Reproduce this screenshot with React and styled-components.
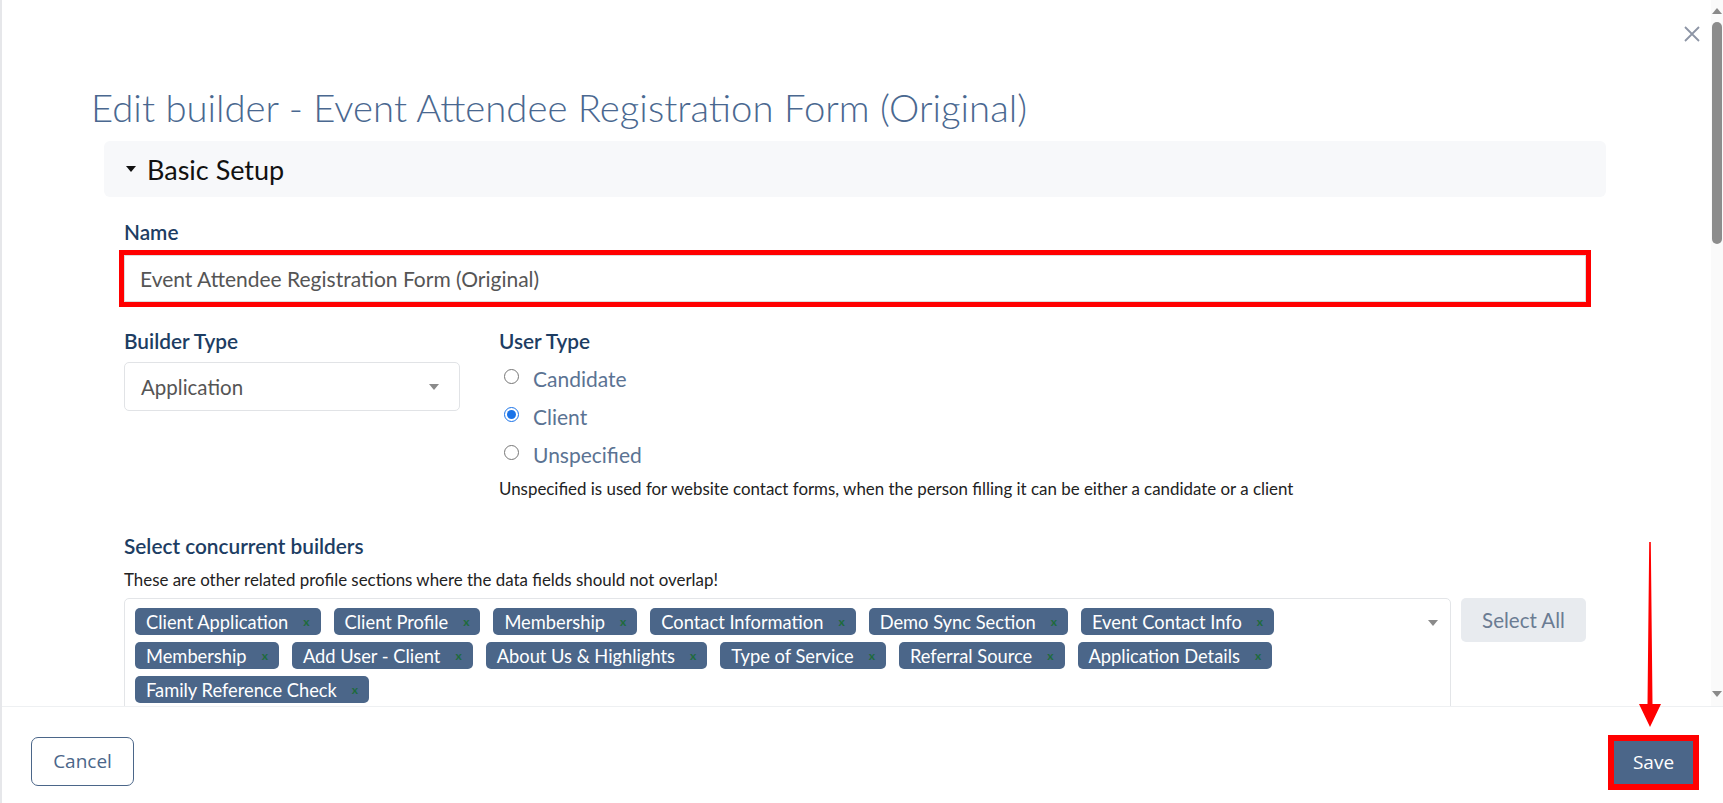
import React from 'react'
import styled, { createGlobalStyle } from 'styled-components'

const GlobalStyle = createGlobalStyle`
    html, body {
        margin: 0;
        padding: 0;
        background: #fff;
    }
    body {
        font-family: 'Lato', 'Noto Sans', sans-serif;
        overflow: hidden;
    }
    * {
        box-sizing: border-box;
    }
`

const firstRow = ['Client Application', 'Client Profile', 'Membership', 'Contact Information', 'Demo Sync Section', 'Event Contact Info']
const secondRow = ['Membership', 'Add User - Client', 'About Us & Highlights', 'Type of Service', 'Referral Source', 'Application Details']
const thirdRow = ['Family Reference Check']

const userTypes = [
    { label: 'Candidate', checked: false },
    { label: 'Client', checked: true },
    { label: 'Unspecified', checked: false },
]

export default function App() {
    return (
        <>
            <GlobalStyle />
            <Modal>
                <Body>
                    <Content>
                        <TopBar>
                            <CloseButton aria-label="close">
                                <svg width="16" height="16" viewBox="0 0 16 16">
                                    <path d="M1 1 L15 15 M15 1 L1 15" stroke="#8d95a5" strokeWidth="1.8" fill="none" />
                                </svg>
                            </CloseButton>
                        </TopBar>
                        <Title>Edit builder - Event Attendee Registration Form (Original)</Title>
                        <Panel>
                            <PanelHeader>
                                <Caret />
                                <span>Basic Setup</span>
                            </PanelHeader>
                            <Form>
                                <Label>Name</Label>
                                <NameInput defaultValue="Event Attendee Registration Form (Original)" />

                                <TwoCols>
                                    <Col width="336px">
                                        <Label>Builder Type</Label>
                                        <SelectBox>
                                            <span>Application</span>
                                            <SmallCaret />
                                        </SelectBox>
                                    </Col>
                                    <Col>
                                        <Label>User Type</Label>
                                        <RadioList>
                                            {userTypes.map((u) => (
                                                <RadioRow key={u.label}>
                                                    <Radio type="radio" name="usertype" defaultChecked={u.checked} />
                                                    <RadioLabel>{u.label}</RadioLabel>
                                                </RadioRow>
                                            ))}
                                        </RadioList>
                                        <Help top={-2} bottom={9}>
                                            Unspecified is used for website contact forms, when the person filling it can be either a candidate or a client
                                        </Help>
                                    </Col>
                                </TwoCols>

                                <Label>Select concurrent builders</Label>
                                <Help top={1} bottom={8}>
                                    These are other related profile sections where the data fields should not overlap!
                                </Help>
                                <MultiRow>
                                    <MultiBox>
                                        <TagArea>
                                            {[firstRow, secondRow, thirdRow].map((row, i) => (
                                                <TagLine key={i}>
                                                    {row.map((t) => (
                                                        <Tag key={t}>
                                                            {t}
                                                            <TagX>x</TagX>
                                                        </Tag>
                                                    ))}
                                                </TagLine>
                                            ))}
                                        </TagArea>
                                        <SmallCaret />
                                    </MultiBox>
                                    <SelectAll>Select All</SelectAll>
                                </MultiRow>
                            </Form>
                        </Panel>
                    </Content>
                    <Scrollbar>
                        <ScrollArrow />
                        <Thumb />
                        <Track />
                        <ScrollArrow down />
                    </Scrollbar>
                </Body>
                <Footer>
                    <CancelButton>Cancel</CancelButton>
                    <SaveButton>Save</SaveButton>
                </Footer>
                <Arrow>
                    <svg width="24" height="185" viewBox="0 0 24 185">
                        <polygon points="11.2,0 12.8,0 14.5,162 23,162 12,185 1,162 9.5,162" fill="#ff0000" />
                    </svg>
                </Arrow>
            </Modal>
        </>
    )
}

const Modal = styled.div`
    position: relative;
    width: 1723px;
    height: 803px;
    display: flex;
    flex-direction: column;
    border-left: 2px solid #e6e7ea;
    background: #fff;
`

const Body = styled.div`
    height: 707px;
    display: flex;
    overflow: hidden;
    border-bottom: 1px solid #eef0f2;
`

const Content = styled.div`
    flex: 1;
    padding: 0 92px 0 89px;
`

const TopBar = styled.div`
    display: flex;
    justify-content: flex-end;
    height: 52px;
    padding-top: 26px;
    margin-right: -81px;
`

const CloseButton = styled.button`
    width: 16px;
    height: 16px;
    padding: 0;
    border: 0;
    background: none;
    display: flex;
`

const Title = styled.h1`
    margin: 0;
    height: 89px;
    padding-top: 36px;
    font-size: 38.3px;
    font-weight: 300;
    line-height: 1;
    color: #4a6890;
    white-space: nowrap;
`

const Panel = styled.div`
    margin: 0 13px;
`

const PanelHeader = styled.div`
    height: 56px;
    display: flex;
    align-items: center;
    gap: 11px;
    padding-left: 22px;
    background: #f7f8fa;
    border-radius: 6px;
    font-size: 27px;
    color: #111;
`

const Caret = styled.span`
    width: 0;
    height: 0;
    border-left: 5.5px solid transparent;
    border-right: 5.5px solid transparent;
    border-top: 6px solid #111;
`

const Form = styled.div`
    padding: 24px 20px 0 20px;
    display: flex;
    flex-direction: column;
`

const Label = styled.div`
    font-size: 20.8px;
    font-weight: 600;
    color: #1d3d63;
    line-height: 22px;
    margin-bottom: 12px;
`

const NameInput = styled.input`
    height: 47px;
    width: 100%;
    padding: 0 15px;
    border: 1px solid #ddd;
    outline: 5px solid #ff0000;
    outline-offset: 0;
    font-family: inherit;
    font-size: 21px;
    color: #555;
    margin-bottom: 28px;
`

const TwoCols = styled.div`
    display: flex;
    gap: 39px;
    margin-bottom: 27px;
`

const Col = styled.div`
    width: ${(p) => p.width || 'auto'};
    flex: ${(p) => (p.width ? 'none' : '1')};
    display: flex;
    flex-direction: column;
`

const SelectBox = styled.div`
    height: 49px;
    margin-top: -2px;
    border: 1px solid #e1e3e6;
    border-radius: 5px;
    display: flex;
    align-items: center;
    justify-content: space-between;
    padding: 0 20px 0 16px;
    font-size: 20.5px;
    color: #555;
`

const SmallCaret = styled.span`
    width: 0;
    height: 0;
    border-left: 5.5px solid transparent;
    border-right: 5.5px solid transparent;
    border-top: 6px solid #8a8a8a;
    flex: none;
`

const RadioList = styled.div`
    display: flex;
    flex-direction: column;
    gap: 14px;
    margin-top: 2px;
    margin-bottom: 15px;
`

const RadioRow = styled.label`
    display: flex;
    align-items: center;
    gap: 14px;
    height: 24px;
`

const Radio = styled.input`
    width: 15px;
    height: 15px;
    margin: -3px 0 0 5px;
    accent-color: #1a73e8;
`

const RadioLabel = styled.span`
    font-size: 21px;
    color: #5b7393;
`

const Help = styled.div`
    font-size: 16.9px;
    color: #222;
    line-height: 20px;
    margin-top: ${(p) => p.top}px;
    margin-bottom: ${(p) => p.bottom}px;
    white-space: nowrap;
`

const MultiRow = styled.div`
    display: flex;
    gap: 10px;
    align-items: flex-start;
`

const MultiBox = styled.div`
    flex: 1;
    height: 130px;
    border: 1px solid #e3e5e8;
    border-radius: 5px;
    display: flex;
    align-items: flex-start;
    justify-content: space-between;
    padding: 9px 12px 0 10px;

    & > span {
        margin-top: 12px;
    }
`

const TagArea = styled.div`
    display: flex;
    flex-direction: column;
    gap: 7px;
`

const TagLine = styled.div`
    display: flex;
    gap: 13px;
`

const Tag = styled.span`
    height: 27px;
    display: inline-flex;
    align-items: center;
    gap: 15px;
    padding: 0 11px 0 11px;
    background: #4b6689;
    color: #fff;
    border-radius: 5px;
    font-size: 18.3px;
    white-space: nowrap;
`

const TagX = styled.span`
    color: #1e6b3c;
    font-size: 12px;
    font-weight: 700;
`

const SelectAll = styled.button`
    width: 125px;
    height: 44px;
    border: 0;
    border-radius: 5px;
    background: #e8ebef;
    color: #6b7c93;
    font-family: 'Lato', sans-serif;
    font-size: 20.5px;
`

const Scrollbar = styled.div`
    width: 12px;
    flex: none;
    background: #fafafa;
    display: flex;
    flex-direction: column;
    align-items: center;
    padding: 8px 0 9px;
`

const ScrollArrow = styled.span`
    width: 0;
    height: 0;
    border-left: 5px solid transparent;
    border-right: 5px solid transparent;
    ${(p) => (p.down ? 'border-top: 6px solid #8a8a8a;' : 'border-bottom: 6px solid #8a8a8a;')}
`

const Thumb = styled.div`
    width: 10px;
    height: 222px;
    margin-top: 8px;
    border-radius: 5px;
    background: #8c8c8c;
`

const Track = styled.div`
    flex: 1;
`

const Footer = styled.div`
    flex: 1;
    display: flex;
    align-items: center;
    justify-content: space-between;
    padding: 14px 30px 0 29px;
`

const CancelButton = styled.button`
    width: 103px;
    height: 49px;
    margin-top: -2px;
    border: 1px solid #4b6689;
    border-radius: 7px;
    background: #fff;
    color: #4b6689;
    font-family: 'Open Sans', sans-serif;
    font-size: 19px;
`

const SaveButton = styled.button`
    width: 79px;
    height: 43px;
    border: 0;
    border-radius: 0;
    background: #4b6689;
    color: #fff;
    font-family: 'Open Sans', sans-serif;
    font-size: 19px;
    outline: 6px solid #ff0000;
`

const Arrow = styled.div`
    position: absolute;
    left: 1636px;
    top: 542px;
    line-height: 0;
`
